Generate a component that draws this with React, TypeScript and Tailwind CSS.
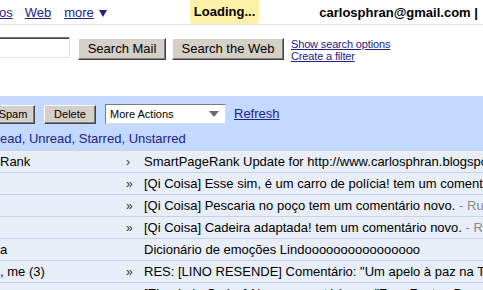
const link = 'text-[#22228a] underline';

type Row = {
  sender: string;
  mark: string;
  subject: string;
  snippet?: string;
};

const rows: Row[] = [
  { sender: 'Rank', mark: '›', subject: 'SmartPageRank Update for http://www.carlosphran.blogspot.com' },
  { sender: '', mark: '»', subject: '[Qi Coisa] Esse sim, é um carro de polícia! tem um comentário novo.' },
  { sender: '', mark: '»', subject: '[Qi Coisa] Pescaria no poço tem um comentário novo.', snippet: ' - Rui' },
  { sender: '', mark: '»', subject: '[Qi Coisa] Cadeira adaptada! tem um comentário novo.', snippet: ' - Rui' },
  { sender: 'a', mark: '', subject: 'Dicionário de emoções Lindoooooooooooooooo' },
  { sender: ', me (3)', mark: '»', subject: 'RES: [LINO RESENDE] Comentário: "Um apelo à paz na Terra"' },
  { sender: '', mark: '»', subject: '[Ebook do Carlos] Novo comentário em "Free Fonts - Download"' },
];

function ClassicButton({ label, className }: { label: string; className: string }) {
  return (
    <div
      className={`flex shrink-0 items-center justify-center border border-t-white border-l-white border-r-[#404040] border-b-[#404040] bg-[#d4d0c8] text-black shadow-[inset_-1px_-1px_0_#808080] ${className}`}
    >
      {label}
    </div>
  );
}

export default function App() {
  return (
    <div className="h-[290px] w-[483px] overflow-hidden bg-white font-['Liberation_Sans',Arial,sans-serif] text-[13px] text-black">
      {/* top links */}
      <div className="flex h-[25px] items-center overflow-hidden whitespace-nowrap border-b border-[#e4e4e4] leading-[15px]">
        <span className={`-ml-[1px] shrink-0 ${link}`}>os</span>
        <span className={`ml-[12px] shrink-0 ${link}`}>Web</span>
        <span className={`ml-[13px] shrink-0 ${link}`}>more</span>
        <svg className="ml-[5px] mt-[1px] shrink-0" width="8" height="8" viewBox="0 0 8 8">
          <path d="M0 1h8L4 8z" fill="#22228a" />
        </svg>
        <div className="-mt-[1px] ml-[83px] flex h-[24px] shrink-0 items-center rounded-b-[3px] bg-[#fff1a8] px-[4px] font-bold">
          Loading...
        </div>
        <span className="ml-[60px] shrink-0 font-bold">carlosphran@gmail.com |</span>
      </div>

      {/* search */}
      <div className="mt-[12px] flex h-[25px] items-start">
        <div className="-ml-[30px] h-[21px] w-[100px] shrink-0 border border-t-[#7b7b7b] border-l-[#7b7b7b] border-r-[#e2e2e2] border-b-[#e2e2e2] bg-white shadow-[inset_1px_1px_0_#404040]" />
        <ClassicButton label="Search Mail" className="ml-[8px] mt-[1px] h-[22px] w-[88px]" />
        <ClassicButton label="Search the Web" className="ml-[6px] mt-[1px] h-[22px] w-[112px]" />
        <div className="ml-[7px] mt-[1px] flex flex-col whitespace-nowrap text-[11px] leading-[12px] tracking-[-0.15px]">
          <span className={link}>Show search options</span>
          <span className={link}>Create a filter</span>
        </div>
      </div>

      {/* action bar */}
      <div className="mt-[34px] h-[54px] bg-[#c3d9ff] pt-[8px]">
        <div className="flex h-[20px] items-center whitespace-nowrap text-[11px]">
          <ClassicButton label="Spam" className="-ml-[9px] h-[19px] w-[44px]" />
          <ClassicButton label="Delete" className="ml-[9px] h-[19px] w-[52px]" />
          <div className="ml-[9px] flex h-[20px] w-[121px] shrink-0 items-center justify-between border border-t-[#7b7b7b] border-l-[#7b7b7b] border-r-[#dcdcdc] border-b-[#dcdcdc] bg-white pl-[4px] pr-[6px]">
            <span>More Actions</span>
            <svg width="10" height="6" viewBox="0 0 10 6">
              <path d="M0 0h10L5 6z" fill="#6b6b6b" />
            </svg>
          </div>
          <span className={`ml-[8px] text-[13px] ${link}`}>Refresh</span>
        </div>
        <div className="mt-[7px] whitespace-nowrap leading-[16px] text-[#22228a]">
          ead, Unread, Starred, Unstarred
        </div>
      </div>

      {/* message list */}
      <div>
        {rows.map((r, i) => (
          <div
            key={i}
            className="flex h-[22px] items-center whitespace-nowrap border-t border-[#c7d2e6] bg-[#e8eef7]"
          >
            <div className="w-[120px] shrink-0 overflow-hidden">{r.sender}</div>
            <div className="w-[24px] shrink-0 pl-[6px] text-[12px] text-[#333]">{r.mark}</div>
            <div className="overflow-hidden">
              {r.subject}
              {r.snippet && <span className="text-[#8a8a8a]">{r.snippet}</span>}
            </div>
          </div>
        ))}
      </div>
    </div>
  );
}
